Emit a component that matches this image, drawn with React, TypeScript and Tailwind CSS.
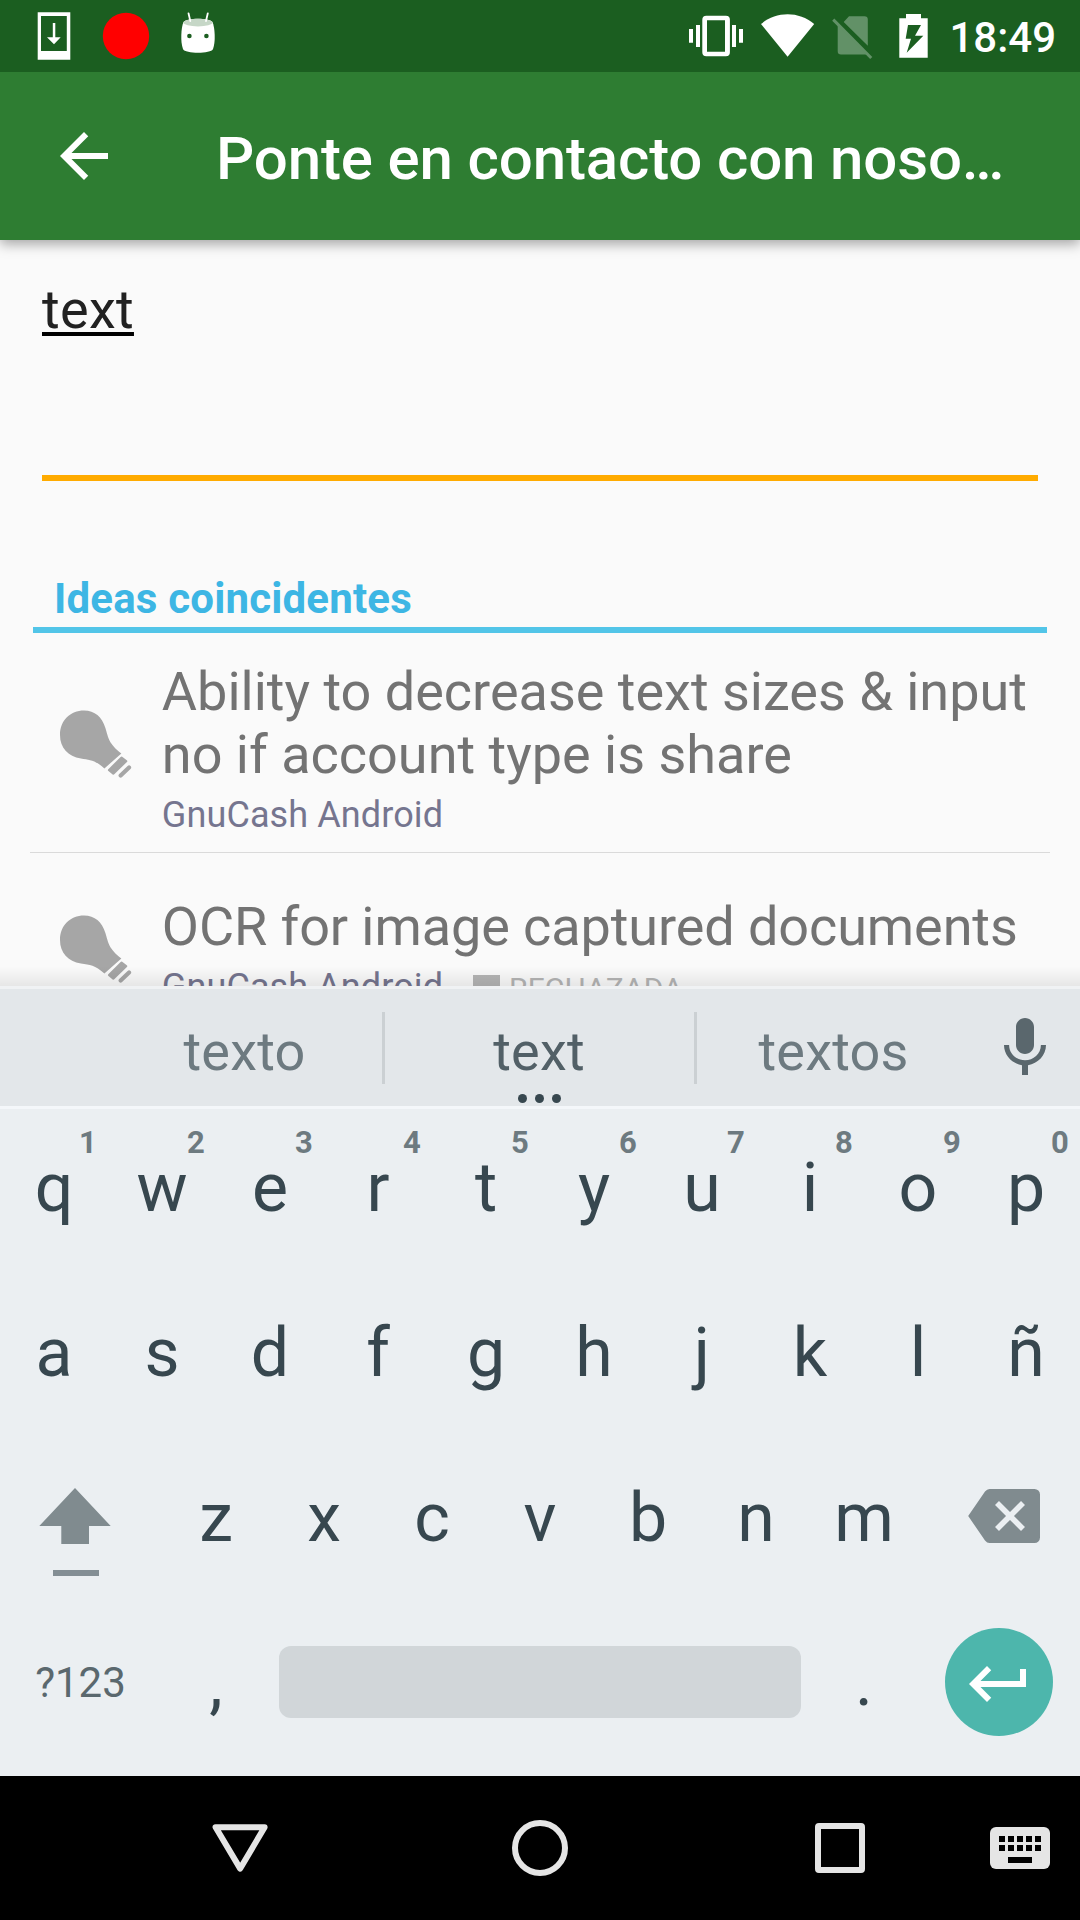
import React from 'react';

function StatusBar() {
  return (
    <div className="relative z-20 flex h-[72px] justify-between bg-[#1b5e20] pl-[30px] pr-6 text-white">
      <div className="flex gap-6">
        <svg className="h-[72px] w-12" viewBox="30 0 48 72" fill="currentColor">
          <path fillRule="evenodd" d="M37.7 12.3H70.3V59.7H37.7ZM41 16V51H66.8V16Z" />
          <path d="M52.8 23h2.5v14.3h5.4L54 44.3l-7-7h5.8z" />
        </svg>
        <svg className="h-[72px] w-12" viewBox="102 0 48 72">
          <circle cx="126" cy="36" r="23.2" fill="#ff0000" />
        </svg>
        <svg className="h-[72px] w-12" viewBox="174 0 48 72" fill="currentColor">
          <path d="M183.5 22C181 28 180.300 42 183 49C185 54 211 54 213 49C215.700 42 215 28 212.500 22C209 17.700 187 17.700 183.500 22Z" />
          <ellipse cx="198" cy="22.600" rx="14.600" ry="3.800" fill="#c6d7c7" />
          <path d="M188.500 13.300l1.800 7.700M207.800 13.300L206 21" stroke="white" strokeWidth="1.800" strokeLinecap="round" />
          <circle cx="189.400" cy="36" r="2.300" fill="#1b5e20" />
          <circle cx="206.400" cy="36" r="2.300" fill="#1b5e20" />
        </svg>
      </div>
      <div className="flex gap-2">
        <svg className="h-[72px] w-16" viewBox="684 0 64 72" fill="currentColor">
          <path d="M689 29h4v13.700h-4zM696 25h4v22h-4zM732 25h4v22h-4zM739 29h4v13.700h-4z" />
          <path fillRule="evenodd" d="M706.300 15.700h19.600a4 4 0 0 1 4 4v32.600a4 4 0 0 1-4 4h-19.600a4 4 0 0 1-4-4V19.700a4 4 0 0 1 4-4zM707 20.300v31.400h18V20.300z" />
        </svg>
        <svg className="h-[72px] w-16" viewBox="756 0 64 72" fill="currentColor">
          <path d="M787.600 56.800L761 24C768.500 17.500 778 14.200 787.600 14.200S806.500 17.500 814.200 24Z" />
        </svg>
        <svg className="h-[72px] w-14" viewBox="828 0 56 72" fill="#629167">
          <path d="M843.700 22L849 16.300H864.500A3.300 3.300 0 0 1 867.800 19.600V45.800ZM837.700 25L867 54.500H841A3.300 3.300 0 0 1 837.700 51.200Z" />
          <path d="M834.300 18.500L872.300 57L870.200 59L832.200 20.700Z" />
        </svg>
        <svg className="h-[72px] w-11" viewBox="892 0 44 72" fill="currentColor">
          <path fillRule="evenodd" d="M906 14h15v4.300h6.700v39.400h-28.400V18.300h6.700zM908 25L905.700 38.700H911L906.700 52.700L923.300 35.700H915L921 25Z" />
        </svg>
        <span className="w-28 pt-0.5 text-right text-[42px] font-medium leading-[71px]">18:49</span>
      </div>
    </div>
  );
}

function AppBar() {
  return (
    <div className="relative z-10 flex h-[168px] items-center bg-[#2e7d32] pl-12 text-white shadow-[0_4px_12px_rgba(0,0,0,0.35)]">
      <svg className="size-[72px]" viewBox="0 0 24 24" fill="currentColor">
        <path d="M20 11H7.830l5.590-5.590L12 4l-8 8 8 8 1.410-1.410L7.830 13H20v-2z" />
      </svg>
      <h1 className="ml-24 whitespace-nowrap pt-[5px] text-[60px] font-medium leading-[72px] tracking-[-0.14px]">Ponte en contacto con noso…</h1>
    </div>
  );
}

function Bulb() {
  return (
    <svg className="h-[68px] w-[72px]" viewBox="0 0 72 68" fill="#a6a6a6">
      <path d="M24 .5C35 .5 42 7 45.500 18C48.500 28 49 34 61.500 43.500L44.500 58.500C35 50 30 50 21 48.500C8 46.500 0 38 0 25C0 10.500 10.500 .5 24 .5Z" />
      <path d="M61.600 47.800L66.200 51.200L53.500 63.500L49.300 60.200Z" stroke="#a6a6a6" strokeWidth="2.500" strokeLinejoin="round" />
      <path d="M69.200 57.500L60.800 65.600" stroke="#a6a6a6" strokeWidth="4.200" strokeLinecap="round" />
    </svg>
  );
}

function Idea({ title, tag, className }: { title: string; tag?: string; className: string }) {
  return (
    <div className={'flex ' + className}>
      <Bulb />
      <div className="ml-[30px] w-[890px]">
        <div className="text-[54px] leading-[63px] text-[#737373]">{title}</div>
        <div className="flex h-[56px] items-center pt-[2px] text-[36px] leading-[42px] tracking-[0.1px] text-[#75758f]">
          <span>GnuCash Android</span>
          {tag && (
            <span className="ml-[30px] flex items-center text-[30px] text-[#b5b5b5]">
              <span className="mr-[9px] mt-[2px] size-[27px] bg-[#b5b5b5]" />
              <span className="pt-[3px]">{tag}</span>
            </span>
          )}
        </div>
      </div>
    </div>
  );
}

function Content() {
  return (
    <div className="relative h-[746px] overflow-hidden bg-[#fafafa]">
      <div className="mx-[42px] h-[241px] border-b-[6px] border-[#ffab00] pt-[39px] text-[54px] leading-[62px] tracking-[0.3px] text-[#212121]">
        <span className="underline decoration-black decoration-[4px] underline-offset-[4px]">text</span>
      </div>
      <div className="mx-[33px] mt-[94px] h-[58px] border-b-[6px] border-[#52c5e8] pl-[21px] text-[42px] font-bold leading-[48px] tracking-[0.18px] text-[#3db6e4]">
        Ideas coincidentes
      </div>
      <div className="mx-[30px] h-[220px] border-b border-[#dadada] pt-[27px]">
        <Idea title="Ability to decrease text sizes & input no if account type is share" className="pl-[30px] [&>svg]:mt-[50px]" />
      </div>
      <div className="mx-[30px] pt-[42px] tracking-[-0.09px]">
        <Idea title="OCR for image captured documents" tag="RECHAZADA" className="pl-[30px] [&>svg]:mt-[20px]" />
      </div>
      <div className="absolute inset-x-0 bottom-0 h-5 bg-linear-to-b from-transparent to-black/8" />
    </div>
  );
}

function Suggestions() {
  return (
    <div className="flex h-[123px] items-center border-y-[3px] border-t-[#f0f2f4] border-b-[#f4f7fa] bg-[#e3e7ea] text-[54px] leading-[62px] tracking-[0.2px] text-[#6d7a80]">
      <div className="ml-[106px] w-[276px] pl-px pt-[9px] text-center">texto</div>
      <div className="h-[72px] w-[3px] bg-[#cbd0d3]" />
      <div className="relative w-[309px] pr-px pt-[9px] text-center text-[#526067]">
        text
        <div className="absolute inset-x-0 top-[82px] flex justify-center gap-2 pr-px">
          <i className="size-[9px] rounded-full bg-[#37474f]" />
          <i className="size-[9px] rounded-full bg-[#37474f]" />
          <i className="size-[9px] rounded-full bg-[#37474f]" />
        </div>
      </div>
      <div className="h-[72px] w-[3px] bg-[#cbd0d3]" />
      <div className="w-[273px] pt-[9px] text-center">textos</div>
      <svg className="ml-[19px] size-[72px]" viewBox="0 0 24 24" fill="#5a676d">
        <path d="M12 14c1.660 0 3-1.340 3-3V5c0-1.660-1.340-3-3-3S9 3.340 9 5v6c0 1.660 1.340 3 3 3zm5.300-3c0 3-2.540 5.100-5.300 5.100S6.700 14 6.700 11H5c0 3.410 2.720 6.230 6 6.720V21h2v-3.280c3.280-.48 6-3.300 6-6.720h-1.700z" />
      </svg>
    </div>
  );
}

const ROW1 = ['q', 'w', 'e', 'r', 't', 'y', 'u', 'i', 'o', 'p'];
const ROW2 = ['a', 's', 'd', 'f', 'g', 'h', 'j', 'k', 'l', 'ñ'];
const ROW3 = ['z', 'x', 'c', 'v', 'b', 'n', 'm'];

function Keyboard() {
  return (
    <div className="h-[667px] bg-[#ebeff2] text-center text-[68px] leading-[80px] text-[#37474f]">
      <div className="grid h-[161px] grid-cols-10 items-center pb-[3px]">
        {ROW1.map((k, i) => (
          <div key={k} className="relative">
            {k}
            <span className="absolute -top-[23px] left-[79px] text-[31px] font-bold leading-[36px] text-[#6d7a80]">{(i + 1) % 10}</span>
          </div>
        ))}
      </div>
      <div className="grid h-[165px] grid-cols-10 items-center">
        {ROW2.map((k) => (
          <div key={k}>{k}</div>
        ))}
      </div>
      <div className="flex h-[165px] items-center">
        <svg className="h-[165px] w-[162px]" viewBox="0 1435 162 165" fill="#808b8f">
          <path d="M75 1488L110.700 1526H89V1544H61.300V1526H39.300Z" />
          <path d="M53 1570H99V1576H53Z" fill="#838e94" />
        </svg>
        {ROW3.map((k) => (
          <div key={k} className="w-[108px]">{k}</div>
        ))}
        <svg className="h-[165px] w-[162px]" viewBox="918 1435 162 165">
          <path d="M992 1489H1034.500A5.500 5.500 0 0 1 1040 1494.500V1537.500A5.500 5.500 0 0 1 1034.500 1543H989.500Q987 1543 985 1540.500L968.200 1516L985 1491.500Q987 1489 989.500 1489Z" fill="#808b8f" />
          <path d="M997 1503L1023 1529M1023 1503L997 1529" stroke="#ebeff2" strokeWidth="5.600" />
        </svg>
      </div>
      <div className="flex h-[164px] items-center">
        <div className="w-[161px] pt-0.5 text-[42px] text-[#5a686e]">?123</div>
        <div className="ml-px w-[108px] pt-px">,</div>
        <div className="mx-[9px] h-[72px] w-[522px] rounded-xl bg-[#d1d6d9]" />
        <div className="w-[108px]">.</div>
        <div className="ml-[27px] flex size-[108px] items-center justify-center rounded-full bg-[#4db6ac] pt-1">
          <svg className="size-[72px]" viewBox="0 0 24 24" fill="white">
            <path d="M19 7v4H5.830l3.580-3.590L8 6l-6 6 6 6 1.410-1.410L5.830 13H21V7z" />
          </svg>
        </div>
      </div>
    </div>
  );
}

function NavBar() {
  return (
    <div className="flex h-36 items-center bg-black pl-[204px] text-[#e5e5e5]">
      <svg className="size-[72px]" viewBox="0 0 72 72" fill="none" stroke="currentColor" strokeWidth="6" strokeLinejoin="round">
        <path d="M11.600 15.200H60.600L36.200 56.600Z" />
      </svg>
      <svg className="ml-[228px] size-[72px]" viewBox="0 0 72 72" fill="none" stroke="currentColor" strokeWidth="6">
        <circle cx="36" cy="36" r="25" />
      </svg>
      <svg className="ml-[228px] size-[72px]" viewBox="0 0 72 72" fill="currentColor" fillRule="evenodd">
        <path d="M15 11H57A4 4 0 0 1 61 15V57A4 4 0 0 1 57 61H15A4 4 0 0 1 11 57V15A4 4 0 0 1 15 11ZM17 17V55H55V17Z" />
      </svg>
      <svg className="ml-[108px] size-[72px]" viewBox="0 0 72 72" fill="currentColor">
        <rect x="6" y="15" width="60" height="42" rx="6" />
        <g fill="black">
          {[15, 24, 33, 42, 51].map((x) => (
            <path key={x} d={`M${x} 24h6v6h-6zM${x} 33h6v6h-6z`} />
          ))}
          <path d="M24 45h24v6H24z" />
        </g>
      </svg>
    </div>
  );
}

export default function App() {
  return (
    <div className="h-[1920px] w-[1080px] overflow-hidden bg-[#fafafa] font-['Roboto',sans-serif]">
      <StatusBar />
      <AppBar />
      <Content />
      <Suggestions />
      <Keyboard />
      <NavBar />
    </div>
  );
}
